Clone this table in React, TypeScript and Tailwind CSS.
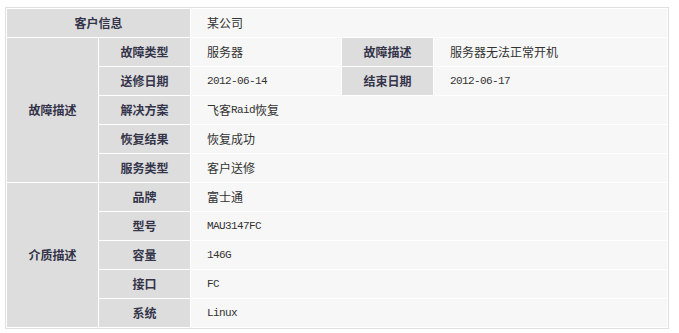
const label = "flex items-center justify-center bg-[#dcdddc] font-bold text-[12px] text-[#34344a]";
const value = "flex items-center bg-[#f7f7f7] pl-[16px] text-[12px] text-[#333]";
const mono = "font-['Liberation_Mono',monospace] text-[11px] tracking-[-0.6px]";

function Mono({ children }: { children: React.ReactNode }) {
  return <span className={mono}>{children}</span>;
}

export default function App() {
  return (
    <div className="min-h-screen bg-white pt-[7px] pl-[5px] font-['Noto_Sans_CJK_SC',sans-serif]">
      <div className="w-[664px] border border-[#e0e0e0] p-px">
        <div className="grid grid-cols-[91px_91px_150px_91px_1fr] grid-rows-[repeat(11,28px)] gap-px">
          <div className={`${label} col-span-2`}>客户信息</div>
          <div className={`${value} col-span-3`}>某公司</div>

          <div className={`${label} row-span-5`}>故障描述</div>
          <div className={label}>故障类型</div>
          <div className={value}>服务器</div>
          <div className={label}>故障描述</div>
          <div className={value}>服务器无法正常开机</div>

          <div className={label}>送修日期</div>
          <div className={value}><Mono>2012-06-14</Mono></div>
          <div className={label}>结束日期</div>
          <div className={value}><Mono>2012-06-17</Mono></div>

          <div className={label}>解决方案</div>
          <div className={`${value} col-span-3`}>飞客<Mono>Raid</Mono>恢复</div>

          <div className={label}>恢复结果</div>
          <div className={`${value} col-span-3`}>恢复成功</div>

          <div className={label}>服务类型</div>
          <div className={`${value} col-span-3`}>客户送修</div>

          <div className={`${label} row-span-5`}>介质描述</div>
          <div className={label}>品牌</div>
          <div className={`${value} col-span-3`}>富士通</div>

          <div className={label}>型号</div>
          <div className={`${value} col-span-3`}><Mono>MAU3147FC</Mono></div>

          <div className={label}>容量</div>
          <div className={`${value} col-span-3`}><Mono>146G</Mono></div>

          <div className={label}>接口</div>
          <div className={`${value} col-span-3`}><Mono>FC</Mono></div>

          <div className={label}>系统</div>
          <div className={`${value} col-span-3`}><Mono>Linux</Mono></div>
        </div>
      </div>
    </div>
  );
}
